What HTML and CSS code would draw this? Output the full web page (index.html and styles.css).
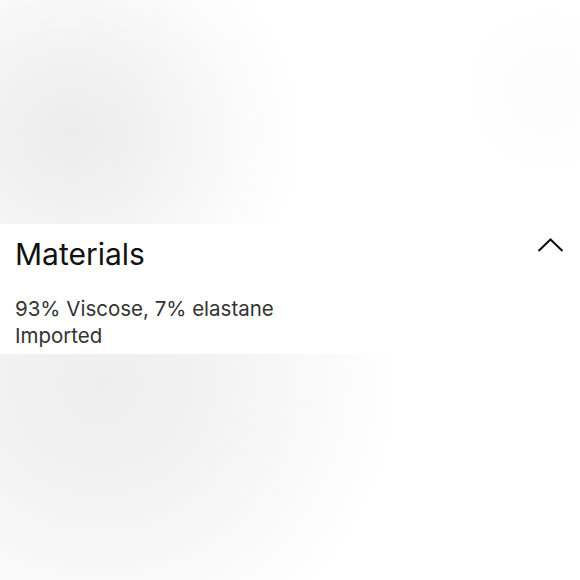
FILE: index.html
```html
<!DOCTYPE html>
<html lang="en">
<head>
<meta charset="utf-8">
<title>Materials</title>
<link rel="stylesheet" href="styles.css">
</head>
<body>
<div class="backdrop backdrop-top"></div>
<section class="accordion">
  <div class="accordion-header">
    <h2 class="accordion-title">Materials</h2>
    <svg class="chevron" width="27" height="16" viewBox="0 0 27 16" aria-hidden="true">
      <path d="M1.5 14 L13.5 2.5 L25.5 14" fill="none" stroke="#111" stroke-width="2"/>
    </svg>
  </div>
  <div class="accordion-body">
    <p>93% Viscose, 7% elastane</p>
    <p>Imported</p>
  </div>
</section>
<div class="backdrop backdrop-bottom"></div>
</body>
</html>
```

FILE: styles.css
```css
html, body {
  margin: 0;
  padding: 0;
  background: #fff;
}
body {
  width: 580px;
  height: 580px;
  overflow: hidden;
  display: flex;
  flex-direction: column;
  font-family: "Inter", "Open Sans", sans-serif;
}
.backdrop-top {
  height: 224px;
  background:
    radial-gradient(circle at 548px 90px, #fcfcfc 0, #fdfdfd 35px, rgba(255,255,255,0) 90px),
    radial-gradient(ellipse 235px 225px at 70px 135px, #ececec 0%, #f3f3f3 40%, #fbfbfb 75%, #fff 100%);
}
.accordion {
  background: #fff;
  padding: 0 16px 0 15px;
  height: 130px;
  box-sizing: border-box;
}
.accordion-header {
  display: flex;
  justify-content: space-between;
  align-items: flex-start;
  padding-top: 11px;
}
.accordion-title {
  margin: 0;
  font-size: 30px;
  font-weight: 400;
  line-height: 38px;
  color: #111;
}
.chevron {
  margin-top: 2px;
}
.accordion-body {
  padding-top: 22px;
}
.accordion-body p {
  margin: 0;
  font-size: 20.5px;
  line-height: 27px;
  color: #333;
}
.backdrop-bottom {
  flex: 1;
  background:
    radial-gradient(ellipse 300px 290px at 100px 30px, #eeeeee 0%, #f2f2f2 35%, #f9f9f9 70%, #fff 100%);
}
```
